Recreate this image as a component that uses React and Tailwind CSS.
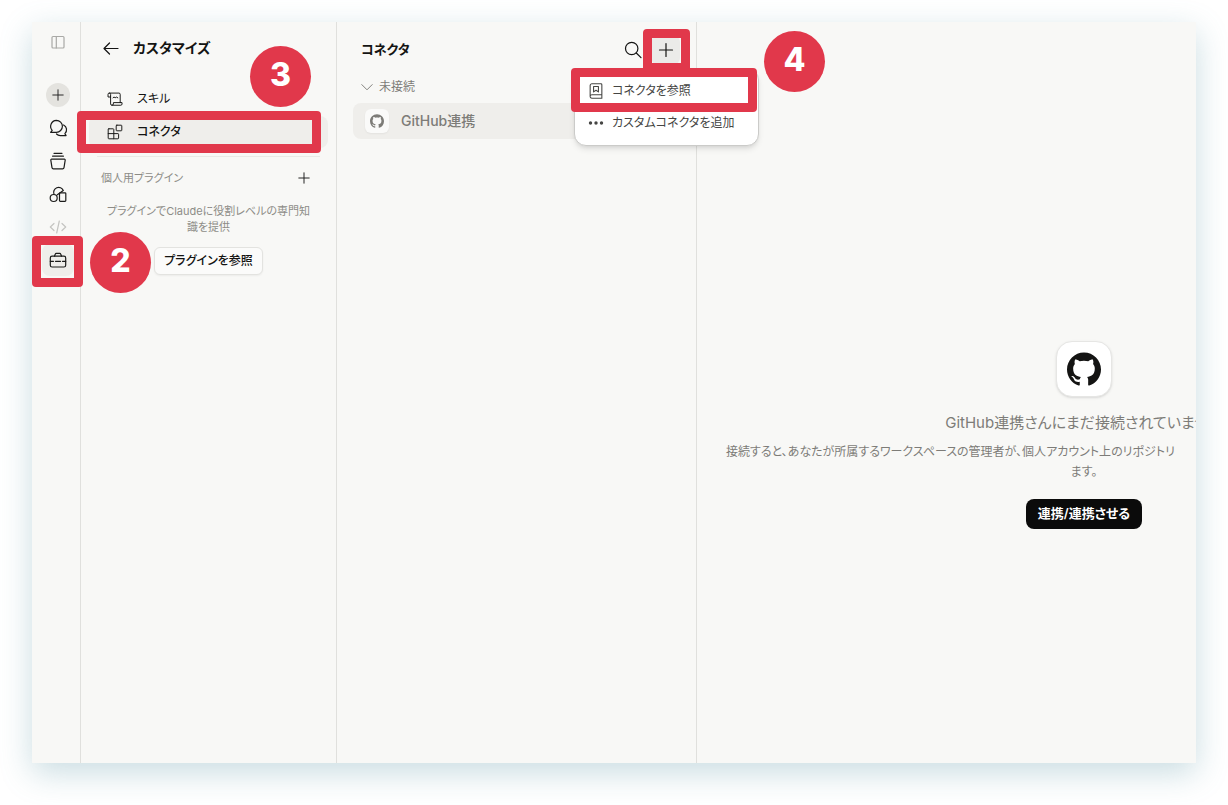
import { SiGithub } from "react-icons/si";

function Icon({ size = "size-5", children }) {
	return (
		<svg
			viewBox="0 0 20 20"
			className={`${size} shrink-0`}
			fill="none"
			stroke="currentColor"
			strokeWidth="1.2"
			strokeLinecap="round"
			strokeLinejoin="round"
			aria-hidden="true"
		>
			{children}
		</svg>
	);
}

function PlusIcon({ size }) {
	return (
		<Icon size={size}>
			<path d="M10 3.5v13M3.5 10h13" />
		</Icon>
	);
}

function SidebarIcon() {
	return (
		<Icon>
			<rect x="4" y="4.5" width="12" height="11.5" rx="1" />
			<path d="M8.3 4.5V16" />
		</Icon>
	);
}

function ChatsIcon() {
	return (
		<Icon>
			<path d="M8.4 2.3a6 6 0 0 1 0 12H2.6l1.6-2a6 6 0 0 1 4.2-10Z" />
			<path d="M15.6 7a5.3 5.3 0 0 1 1.3 8.6l1.2 2h-5.3a5.3 5.3 0 0 1-4.3-1.6" />
		</Icon>
	);
}

function ProjectsIcon() {
	return (
		<Icon>
			<path d="M6 2.3h8M4.6 5.2h10.8" />
			<path d="M3.6 8.2h12.8a.8.8 0 0 1 .8 1l-1.2 7.4a1.4 1.4 0 0 1-1.4 1.2H5.4a1.4 1.4 0 0 1-1.4-1.2L2.8 9.2a.8.8 0 0 1 .8-1Z" />
		</Icon>
	);
}

function ArtifactsIcon() {
	return (
		<Icon>
			<circle cx="5.7" cy="14" r="3.5" />
			<path d="M6 10.3A4.8 4.8 0 1 1 15.3 6.5L9.3 10.8" />
			<rect x="11.5" y="8.8" width="6.3" height="8.6" rx="0.8" />
		</Icon>
	);
}

function CodeIcon() {
	return (
		<Icon>
			<path d="m6 6.5-3.7 3.5L6 13.5M14 6.5l3.7 3.5-3.7 3.5M11.3 4l-2.6 12" />
		</Icon>
	);
}

function ToolboxIcon() {
	return (
		<Icon>
			<path d="M6.5 6.2 7.3 4a1 1 0 0 1 1-.7h3.4a1 1 0 0 1 1 .7l.8 2.2" />
			<rect x="2.3" y="6.2" width="15.4" height="10.8" rx="1.8" />
			<path d="M2.3 11.3h3.2M7.5 11.3h5M14.5 11.3h3.2" />
		</Icon>
	);
}

function ScrollIcon() {
	return (
		<Icon size="size-4">
			<path d="M4.5 7.5H1.3V4.2a1.6 1.6 0 0 1 3.2 0v12a1.7 1.7 0 0 0 1.7 1.6h11a1.6 1.6 0 0 0 1.6-1.6v-1.7H8v1.7a1.7 1.7 0 0 1-1.8 1.6" />
			<path d="M2.9 2.6h12a1.6 1.6 0 0 1 1.6 1.6v10.3M7.5 8.5l1.3-1 1.4 1 1.4-1 1.9 1" />
		</Icon>
	);
}

function BlocksIcon() {
	return (
		<Icon size="size-4">
			<rect x="11.5" y="1.5" width="7" height="7" rx="0.8" />
			<path d="M2.3 6h5.4a.8.8 0 0 1 .8.8v11.7H2.3a.8.8 0 0 1-.8-.8V6.8a.8.8 0 0 1 .8-.8ZM1.5 12h12.2a.8.8 0 0 1 .8.8v4.9a.8.8 0 0 1-.8.8H8.5" />
		</Icon>
	);
}

function BookIcon() {
	return (
		<Icon size="size-[18px]">
			<path d="M3.500 15.700V4a2 2 0 0 1 2-2h10a1 1 0 0 1 1 1v15H5.500a2 2 0 0 1-2-2.300 2 2 0 0 1 2-1.500h11" />
			<path d="M7.300 5h5.400v6L10 9.200 7.300 11Z" />
		</Icon>
	);
}

/* Red frame laid over a control; inset classes come from the caller */
function Highlight({ className }) {
	return (
		<span
			className={`pointer-events-none absolute z-20 rounded-sm border-9 border-[#e1384b] ${className}`}
		/>
	);
}

function Step({ number, className }) {
	return (
		<span
			className={`pointer-events-none absolute z-30 flex size-[61px] items-center justify-center rounded-full bg-[#e1384b] pb-1 font-['Inter',sans-serif] text-[32px] leading-none font-extrabold text-white ${className}`}
		>
			{number}
		</span>
	);
}

const railItems = [
	{ label: "チャット", icon: <ChatsIcon /> },
	{ label: "プロジェクト", icon: <ProjectsIcon /> },
	{ label: "アーティファクト", icon: <ArtifactsIcon /> },
	{ label: "コード", icon: <CodeIcon />, muted: true },
];

function Rail() {
	return (
		<nav className="flex w-[49px] shrink-0 flex-col items-center gap-[9px] border-r border-[#e0e0dd] pt-2 pl-1">
			<button
				aria-label="サイドバー"
				className="mb-5 flex size-6 items-center justify-center text-[#a9a9a6]"
			>
				<SidebarIcon />
			</button>
			<button
				aria-label="新規"
				className="flex size-6 items-center justify-center rounded-full bg-[#e4e3df] text-[#222]"
			>
				<PlusIcon size="size-4" />
			</button>
			{railItems.map((item) => (
				<button
					key={item.label}
					aria-label={item.label}
					className={`flex size-6 items-center justify-center ${
						item.muted ? "text-[#c4c4c1]" : "text-[#1c1c1b]"
					}`}
				>
					{item.icon}
				</button>
			))}
			<div className="relative -my-1">
				<button
					aria-label="カスタマイズ"
					className="flex size-8 items-center justify-center rounded-lg bg-[#efeeeb] text-[#1c1c1b]"
				>
					<ToolboxIcon />
				</button>
				<Highlight className="-top-2 -right-[9px] -bottom-[11px] -left-[10px]" />
				<Step number={2} className="-top-3 left-12" />
			</div>
		</nav>
	);
}

function CustomizePanel() {
	return (
		<section className="w-64 shrink-0 border-r border-[#e0e0dd] px-2 pt-3">
			<header className="flex h-7 items-center gap-3 px-3">
				<button aria-label="戻る">
					<Icon>
						<path d="M17 10.500H3M8.500 5 3 10.500 8.500 16" />
					</Icon>
				</button>
				<h1 className="text-sm font-bold">カスタマイズ</h1>
			</header>

			<div className="mt-[21px] flex flex-col gap-px text-xs">
				<button className="flex h-8 items-center gap-[14px] px-[18px]">
					<ScrollIcon />
					スキル
				</button>
				<div className="relative">
					<button className="flex h-8 w-full items-center gap-[14px] rounded-lg bg-[#efeeeb] px-[18px] font-medium">
						<BlocksIcon />
						コネクタ
					</button>
					<Highlight className="-top-[5px] right-[7px] -bottom-[5px] -left-3" />
					<Step number={3} className="bottom-[41px] left-[161px]" />
				</div>
			</div>

			<hr className="mx-2 mt-2 border-[#e9e9e6]" />

			<div className="mt-[11px] flex h-5 items-center justify-between pr-4 pl-3 text-[11px] text-[#8d8c87]">
				<h2>個人用プラグイン</h2>
				<button aria-label="プラグインを追加" className="text-[#1c1c1b]">
					<PlusIcon size="size-4" />
				</button>
			</div>
			<p className="mx-4 mt-[15px] text-center text-[11px] leading-4 text-[#8d8c87]">
				プラグインでClaudeに役割レベルの専門知識を提供
			</p>
			<div className="mt-3 flex justify-center">
				<button className="h-7 rounded-md border border-[#e3e3e0] bg-[#fbfbfa] px-[9px] text-xs font-medium shadow-xs">
					プラグインを参照
				</button>
			</div>
		</section>
	);
}

function AddMenu() {
	return (
		<div className="absolute top-8 -right-[79px] z-10 w-[185px] rounded-xl border border-[#cbcbc9] bg-white p-1.5 text-xs text-[#454543] shadow-md">
			<div className="relative">
				<button className="flex h-8 w-full items-center gap-[7px] px-1.5 whitespace-nowrap">
					<BookIcon />
					コネクタを参照
				</button>
				<Highlight className="-top-[7px] -right-[5px] -bottom-[5px] -left-[10px]" />
			</div>
			<button className="flex h-8 w-full items-center gap-[7px] px-1.5 whitespace-nowrap">
				<svg viewBox="0 0 18 18" className="size-[18px] shrink-0" fill="currentColor" aria-hidden="true">
					<circle cx="3.500" cy="9" r="1.700" />
					<circle cx="9" cy="9" r="1.700" />
					<circle cx="14.500" cy="9" r="1.700" />
				</svg>
				カスタムコネクタを追加
			</button>
		</div>
	);
}

function ConnectorPanel() {
	return (
		<section className="relative z-10 w-[360px] shrink-0 border-r border-[#e0e0dd] px-4 pt-[14px]">
			<header className="flex h-7 items-center gap-1 pl-2">
				<h2 className="mr-auto text-[13px] font-semibold">コネクタ</h2>
				<button aria-label="検索" className="flex size-7 items-center justify-center">
					<Icon>
						<circle cx="8.700" cy="8.500" r="6.200" />
						<path d="m13.300 13 4.700 4.700" />
					</Icon>
				</button>
				<div className="relative">
					<button
						aria-label="追加"
						className="flex h-7 w-[29px] items-center justify-center rounded-md bg-[#ebebe9]"
					>
						<PlusIcon />
					</button>
					<Highlight className="-top-[7px] -right-[10px] -bottom-2 -left-2" />
					<AddMenu />
					<Step number={4} className="-top-[5px] left-[113px]" />
				</div>
			</header>

			<button className="mt-[13px] flex h-5 items-center gap-1 pl-1.5 text-xs text-[#7d7c78]">
				<Icon size="size-4">
					<path d="m3.500 7 6.500 6.500L16.500 7" />
				</Icon>
				未接続
			</button>
			<button className="mt-1.5 flex h-9 w-full items-center gap-3 rounded-lg bg-[#efeeeb] px-3 text-sm font-medium text-[#7d7c78]">
				<span className="flex size-6 items-center justify-center rounded-md bg-[#fafaf9] shadow-xs">
					<SiGithub className="size-[14px]" />
				</span>
				GitHub連携
			</button>
		</section>
	);
}

function DetailPanel() {
	return (
		<section className="flex min-w-0 flex-1 flex-col justify-center overflow-hidden pt-[84px]">
			<div className="flex w-[774px] flex-col items-center text-[#7d7c78]">
				<div className="flex size-14 items-center justify-center rounded-2xl border border-[#e6e6e4] bg-white text-[#141413] shadow-sm">
					<SiGithub className="size-[34px]" />
				</div>
				<h2 className="mt-[14px] text-[15px] leading-6">
					GitHub連携さんにまだ接続されていません
				</h2>
				<p className="mt-[7px] w-[716px] text-xs leading-5">
					<span className="block whitespace-nowrap">
						接続すると、あなたが所属するワークスペースの管理者が、個人アカウント上のリポジトリ
					</span>
					<span className="block text-center">ます。</span>
				</p>
				<button className="mt-[17px] h-[30px] rounded-lg bg-[#0b0b0b] px-3 text-[13px] font-semibold text-white">
					連携/連携させる
				</button>
			</div>
		</section>
	);
}

export default function App() {
	return (
		<div
			lang="ja"
			className="flex min-h-screen bg-white px-8 pt-[22px] pb-[42px] font-['Inter','Noto_Sans_CJK_JP',sans-serif] text-[#141413] [font-feature-settings:'palt']"
		>
			<main className="flex min-w-0 flex-1 bg-[#f8f8f6] shadow-[0_10px_30px_rgba(90,150,165,0.32)]">
				<Rail />
				<CustomizePanel />
				<ConnectorPanel />
				<DetailPanel />
			</main>
		</div>
	);
}
